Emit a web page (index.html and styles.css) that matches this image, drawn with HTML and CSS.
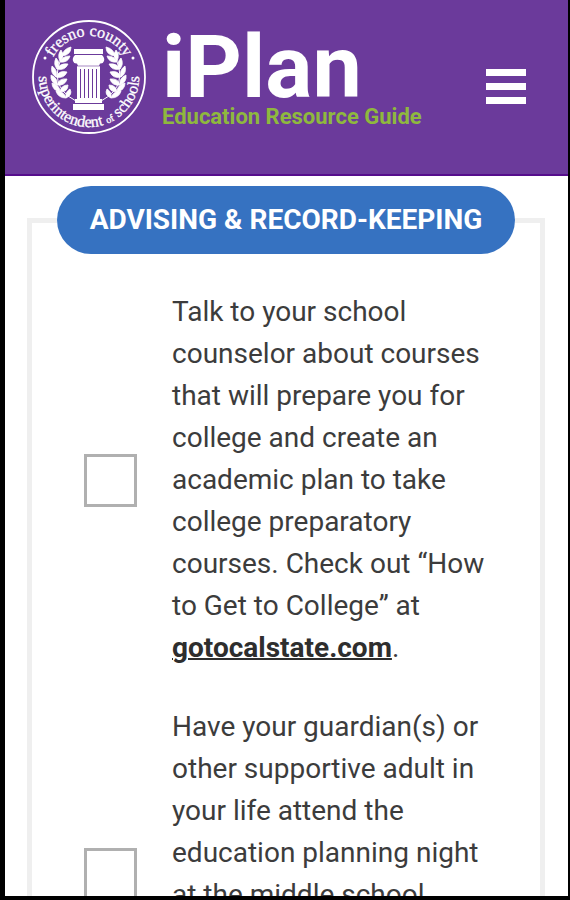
FILE: index.html
```html
<!DOCTYPE html>
<html lang="en">
<head>
    <meta charset="UTF-8">
    <meta name="viewport" content="width=device-width, initial-scale=1.0">
    <title>iPlan Education Resource Guide</title>
    <link rel="stylesheet" href="styles.css">
</head>
<body>
    <div class="screen">
        <header class="header">
            <a href="#" class="brand">
                <svg class="seal" viewBox="0 0 116 116" width="116" height="116" aria-hidden="true">
                    <defs>
                        <path id="arc-top" d="M17 58a41 41 0 0 1 82 0"/>
                        <path id="arc-bottom" d="M14.500 32.900A50.200 50.200 0 1 0 101.500 32.900"/>
                        <!-- one branch of the wreath, mirrored for the other side -->
                        <g id="branch">
                            <path d="M45 82Q15 66 33 34" fill="none" stroke="#fff" stroke-width="1"/>
                            <g fill="#fff" stroke="#fff" stroke-width=".800">
                                <path d="M31 37q1-7 9-9q0 8-9 9z"/>
                                <path d="M29 42q-3-6 1-11q4 6-1 11z"/>
                                <path d="M29 43q2-6 10-6q-2 7-10 6z"/>
                                <path d="M26 50q-4-5-1-11q5 5 1 11z"/>
                                <path d="M26 50q3-6 11-5q-3 7-11 5z"/>
                                <path d="M25 58q-6-4-4-11q6 4 4 11z"/>
                                <path d="M25 58q3-7 11-5q-3 7-11 5z"/>
                                <path d="M26 66q-7-3-6-10q7 3 6 10z"/>
                                <path d="M26 66q2-7 10-6q-2 7-10 6z"/>
                                <path d="M29 73q-8-2-8-9q8 2 8 9z"/>
                                <path d="M29 73q1-7 8-7q0 7-8 7z"/>
                                <path d="M35 79q-8 0-10-7q8 0 10 7z"/>
                                <path d="M35 79q-1-6 4-9q3 6-4 9z"/>
                            </g>
                        </g>
                    </defs>
                    <circle cx="58" cy="58" r="56" fill="none" stroke="#fff" stroke-width="1.800"/>
                    <text class="seal-text"><textPath href="#arc-top" startOffset="50%" text-anchor="middle">fresno county</textPath></text>
                    <text class="seal-text"><textPath href="#arc-bottom" startOffset="50%" text-anchor="middle">superintendent <tspan class="seal-small">of</tspan> schools</textPath></text>
                    <circle cx="14" cy="39" r="1.500" fill="#fff"/>
                    <circle cx="102" cy="39" r="1.500" fill="#fff"/>
                    <use href="#branch"/>
                    <use href="#branch" transform="matrix(-1 0 0 1 115 0)"/>
                    <g fill="#fff">
                        <path d="M43 30h29v5H43z"/>
                        <path d="M44 36h27q3 3 2 6q-1 3-4 2.500L68 47H47l-1-2.500q-3 .500-4-2.500q-1-3 2-6z"/>
                        <path d="M46 47h23v34H46z"/>
                        <path d="M44 80h27v4H44zM42 85h31v6H42z"/>
                    </g>
                    <path d="M49.500 50v29M53.500 50v29M57.500 50v29M61.500 50v29M65.500 50v29" stroke="#6b3a9b" stroke-width="1"/>
                    <path d="M45 47h25M43 84.500h29" stroke="#6b3a9b" stroke-width=".600"/>
                </svg>
                <span class="brand-text">
                    <span class="brand-name">iPlan</span>
                    <span class="tagline">Education Resource Guide</span>
                </span>
            </a>
            <button type="button" class="menu" aria-label="Menu">
                <span></span>
                <span></span>
                <span></span>
            </button>
        </header>
        <main>
            <form>
                <fieldset class="card">
                    <legend class="card-title">ADVISING &amp; RECORD-KEEPING</legend>
                    <div class="item">
                        <input type="checkbox" id="counselor" class="check">
                        <label for="counselor">Talk to your school counselor about courses that will prepare you for college and create an academic plan to take college preparatory courses. Check out “How to Get to College” at <a href="#">gotocalstate.com</a>.</label>
                    </div>
                    <div class="item">
                        <input type="checkbox" id="guardian" class="check">
                        <label for="guardian">Have your guardian(s) or other supportive adult in your life attend the education planning night at the middle school</label>
                    </div>
                </fieldset>
            </form>
        </main>
    </div>
</body>
</html>
```
FILE: styles.css
```css
* {
    padding: 0;
    margin: 0;
    box-sizing: border-box;
}

body {
    font-family: Roboto, "Liberation Sans", sans-serif;
    color: #3c3c3c;
    background-color: #fff;
}

/* device frame */
.screen {
    height: 100vh;
    overflow: hidden;
    border: solid #000;
    border-width: 0 2px 4px 5px;
}

.header {
    display: flex;
    justify-content: space-between;
    align-items: flex-start;
    height: 176px;
    padding: 19px 42px 0 26px;
    border-bottom: 2px solid #560d8c;
    background-color: #6b3a9b;
}

.brand {
    display: flex;
    gap: 15px;
    text-decoration: none;
}

.seal {
    flex: none;
}

.seal-text {
    font-family: "Liberation Serif", serif;
    font-size: 16px;
    fill: #fff;
    stroke: #fff;
    stroke-width: 0.3px;
}

.seal-small {
    font-size: 10px;
}

.brand-text {
    display: flex;
    flex-direction: column;
    padding-top: 8px;
}

.brand-name {
    font-size: 88px;
    line-height: 80px;
    font-weight: 700;
    color: #fff;
}

.tagline {
    font-size: 22px;
    line-height: 20px;
    font-weight: 700;
    color: #8fb83e;
}

.menu {
    display: flex;
    flex-direction: column;
    gap: 7px;
    width: 40px;
    margin-top: 50px;
    border: none;
    background: none;
    cursor: pointer;
}

.menu span {
    width: 100%;
    height: 7px;
    background-color: #fff;
}

.card {
    margin: 10px 23px 0 22px;
    padding: 37px 0;
    border: 5px solid #efefef;
}

.card-title {
    margin: 0 auto;
    padding: 0 33px;
    border-radius: 34px;
    font-size: 28px;
    line-height: 68px;
    font-weight: 700;
    color: #fff;
    background-color: #3672c1;
}

.item {
    display: flex;
    gap: 35px;
    min-height: 336px;
    margin-bottom: 37px;
    padding: 0 40px 0 52px;
    font-size: 28px;
    line-height: 42px;
}

.item a {
    font-weight: 700;
    color: #2e2e2e;
    text-decoration-thickness: 2px;
}

.check {
    flex: none;
    align-self: center;
    width: 53px;
    height: 53px;
    border: 3px solid #b0b0b0;
    background-color: #fff;
    appearance: none;
    cursor: pointer;
}

.check:checked {
    background-color: #3672c1;
}
```
